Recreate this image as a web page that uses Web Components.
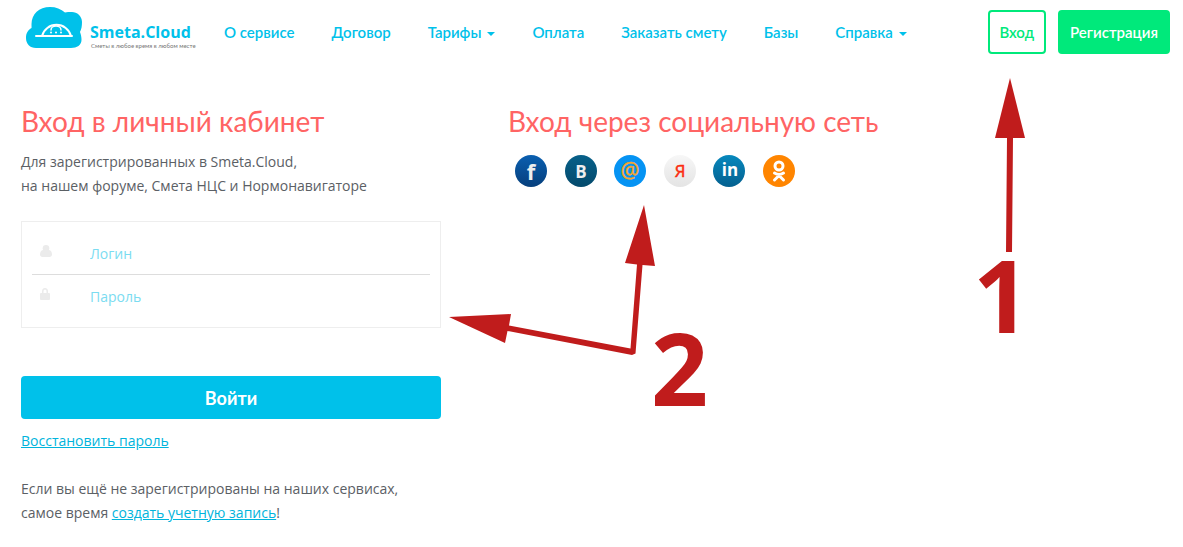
<!DOCTYPE html>
<html lang="ru">
<head>
<meta charset="utf-8">
<title>Smeta.Cloud</title>
<style>
    body {
        margin: 0;
        background: #fff;
        color: #5b6065;
        font: 14px/24px "Open Sans", "Noto Sans", sans-serif;
    }
</style>
</head>
<body>
<smeta-page></smeta-page>

<script>
class SmetaLogo extends HTMLElement {
    constructor() {
        super();
        this.attachShadow({mode:"open"})
    }
    connectedCallback() {
        this.shadowRoot.innerHTML = `<style>
        :host {
            display: block;
            flex: none;
        }
        a, svg {
            display: block;
        }
        </style>
        <a href="#" aria-label="Smeta.Cloud">
        <svg width="172" height="44" viewBox="0 0 172 44">
            <path fill="#00c1ea" d="M40 5.500C36 2 31 0 25 0 14 0 6.500 7 6.500 17c0 2 .2 3.500 0 4C3 23 1 26 1 31c0 6 4 10 10 10h35c6 0 10.500-3 10.500-8 0-3-.5-5-1.500-8 1.500-3 2-6 2-10C57 9 52 5 47 5c-3 0-5 0-7 .5z"/>
            <g fill="none" stroke="#fff" stroke-width="2" stroke-linecap="round">
                <path d="M11 29H47M17 29a15 15 0 0 1 29 0"/>
                <path d="M26 23a5 4 0 0 1 10 0" stroke-width="1.500"/>
            </g>
            <g fill="#fff">
                <circle cx="26" cy="25.500" r="1"/>
                <circle cx="31" cy="25.500" r="1"/>
                <circle cx="36" cy="25.500" r="1"/>
            </g>
            <text x="65" y="31" fill="#00c1ea" font-family="Open Sans" font-weight="700" font-size="16">Smeta.Cloud</text>
            <text x="66" y="41" fill="#777" font-family="Lato" font-size="6">Сметы в любое время в любом месте</text>
        </svg>
        </a>`
    }
}
customElements.define('smeta-logo', SmetaLogo)

class NavItem extends HTMLElement {
    constructor() {
        super();
        this.attachShadow({mode:"open"})
    }
    connectedCallback() {
        this.shadowRoot.innerHTML = `<style>
        :host {
            display: block;
        }
        a {
            display: flex;
            align-items: center;
            gap: 6px;
            color: #00c1ea;
            font: 600 15px/24px Lato, "Open Sans", sans-serif;
            text-decoration: none;
            white-space: nowrap;
        }
        :host([menu]) a::after {
            content: "";
            margin-top: 4px;
            border: 4px solid transparent;
            border-top-color: currentColor;
            border-bottom: 0;
        }
        </style>
        <a href="#"><slot></slot></a>`
    }
}
customElements.define('nav-item', NavItem)

class HeaderButton extends HTMLElement {
    constructor() {
        super();
        this.attachShadow({mode:"open"})
    }
    connectedCallback() {
        this.shadowRoot.innerHTML = `<style>
        :host {
            display: block;
        }
        a {
            display: block;
            padding: 8px 10px;
            border: 2px solid #00e97b;
            border-radius: 4px;
            color: #00e97b;
            font: 600 15px/24px Lato, "Open Sans", sans-serif;
            text-decoration: none;
            white-space: nowrap;
        }
        :host([filled]) a {
            background: #00e97b;
            color: #fff;
        }
        </style>
        <a href="#"><slot></slot></a>`
    }
}
customElements.define('header-button', HeaderButton)

class SiteHeader extends HTMLElement {
    constructor() {
        super();
        this.attachShadow({mode:"open"})
    }
    connectedCallback() {
        this.shadowRoot.innerHTML = `<style>
        :host {
            display: block;
        }
        header {
            display: flex;
            align-items: center;
            padding: 10px 13px 10px 25px;
        }
        nav {
            display: flex;
            gap: 37px;
            margin-left: 27px;
        }
        .buttons {
            display: flex;
            gap: 12px;
            margin-left: auto;
        }
        smeta-logo {
            margin-top: -6px;
        }
        </style>
        <header>
            <smeta-logo></smeta-logo>
            <nav><slot></slot></nav>
            <div class="buttons"><slot name="buttons"></slot></div>
        </header>`
    }
}
customElements.define('site-header', SiteHeader)

class PageSection extends HTMLElement {
    constructor() {
        super();
        this.attachShadow({mode:"open"})
    }
    connectedCallback() {
        this.shadowRoot.innerHTML = `<style>
        :host {
            display: block;
        }
        h2 {
            margin: 0 0 9px;
            color: #ff6464;
            font: 400 28px/40px Lato, "Open Sans", sans-serif;
        }
        </style>
        <section>
            <h2><slot name="title"></slot></h2>
            <slot></slot>
        </section>`
    }
}
customElements.define('page-section', PageSection)

class FormField extends HTMLElement {
    constructor() {
        super();
        this.attachShadow({mode:"open"})
    }
    connectedCallback() {
        let icons = {
            user: '<svg width="12" height="12" viewBox="0 0 12 12"><circle cx="6" cy="3.300" r="3.300"/><path d="M3 5C1 5 0 7.500 0 9.500 0 11 1 12 2.500 12h7C11 12 12 11 12 9.500 12 7.500 11 5 9 5 8 7.500 4 7.500 3 5z"/><path d="M3 5h6v4H3z"/></svg>',
            lock: '<svg width="12" height="12" viewBox="0 0 12 12"><path fill-rule="evenodd" d="M1 5h1V3.500a3 3.500 0 0 1 6 0V5h1q1 0 1 1v5q0 1-1 1H1q-1 0-1-1V6q0-1 1-1zM3.500 5h3V3.500a1.500 2 0 0 0-3 0z"/></svg>'
        }
        this.shadowRoot.innerHTML = `<style>
        :host {
            display: block;
        }
        div {
            display: flex;
        }
        label {
            box-sizing: border-box;
            width: 58px;
            padding: 13px 8px;
        }
        svg {
            display: block;
            fill: #ebebeb;
        }
        input {
            flex: 1;
            min-width: 0;
            height: 42px;
            box-sizing: border-box;
            padding: 0;
            border: 0;
            outline: 0;
            background: none;
            color: inherit;
            font: inherit;
        }
        input::placeholder {
            color: #7bdcf1;
            opacity: 1;
        }
        </style>
        <div>
            <label for="field">${icons[this.getAttribute('icon')]}</label>
            <input id="field" type="${this.getAttribute('type')}" placeholder="${this.getAttribute('label')}" aria-label="${this.getAttribute('label')}">
        </div>`
    }
}
customElements.define('form-field', FormField)

class LoginForm extends HTMLElement {
    constructor() {
        super();
        this.attachShadow({mode:"open"})
    }
    connectedCallback() {
        this.shadowRoot.innerHTML = `<style>
        :host {
            display: block;
        }
        form {
            margin: 0;
        }
        .fields {
            padding: 10px;
            border: 1px solid #eee;
        }
        form-field + form-field {
            border-top: 1px solid #ddd;
        }
        button {
            display: block;
            width: 100%;
            height: 43px;
            margin: 48px 0 10px;
            padding: 0;
            border: 0;
            border-radius: 4px;
            background: #00c1ea;
            color: #fff;
            font: 700 18px/24px Lato, "Open Sans", sans-serif;
        }
        </style>
        <form>
            <div class="fields">
                <form-field icon="user" type="text" label="Логин"></form-field>
                <form-field icon="lock" type="password" label="Пароль"></form-field>
            </div>
            <button type="button">Войти</button>
        </form>`
    }
}
customElements.define('login-form', LoginForm)

class SocialLinks extends HTMLElement {
    constructor() {
        super();
        this.attachShadow({mode:"open"})
    }
    createLink(name, from, to, content) {
        return `<a href="#" aria-label="${name}">
        <svg width="32" height="32" viewBox="0 0 32 32">
            <defs><linearGradient id="${name}" x2="0" y2="1"><stop stop-color="${from}"/><stop offset="1" stop-color="${to}"/></linearGradient></defs>
            <circle cx="16" cy="16" r="16" fill="url(#${name})"/>
            ${content}
        </svg></a>`
    }
    connectedCallback() {
        this.shadowRoot.innerHTML = `<style>
        :host {
            display: block;
        }
        div {
            display: flex;
            justify-content: space-between;
            max-width: 280px;
            padding: 5px 7px;
        }
        svg {
            display: block;
        }
        text {
            font-family: "Open Sans", sans-serif;
            font-weight: 700;
            text-anchor: middle;
        }
        .thin {
            font-weight: 400;
        }
        </style>
        <div>
            ${this.createLink('facebook', '#0a5fb0', '#063f7c', '<text x="16" y="25" font-size="22" fill="#eee">f</text>')}
            ${this.createLink('vk', '#076089', '#044a6c', '<text x="16" y="23" font-size="17" fill="#eee">B</text>')}
            ${this.createLink('mail', '#0593f3', '#0593f3', '<text class="thin" x="16" y="23" font-size="21" fill="#f9a72b" stroke="#f9a72b" stroke-width=".5">@</text>')}
            ${this.createLink('yandex', '#f7f7f7', '#e4e4e4', '<text class="thin" x="16" y="22" font-size="17" fill="#fb2c10" stroke="#fb2c10" stroke-width=".5">Я</text>')}
            ${this.createLink('linkedin', '#0788bd', '#04608f', '<text x="17" y="21" font-size="17" fill="#fff">in</text>')}
            ${this.createLink('ok', '#ff8500', '#ff8500', '<g fill="none" stroke="#fff" stroke-width="3" stroke-linecap="round"><circle cx="16" cy="11" r="4"/><path d="M11.500 18q4.500 3 9 0M16 20.500l-4.500 4.500M16 20.500l4.500 4.500"/></g>')}
        </div>`
    }
}
customElements.define('social-links', SocialLinks)

// arrows and numbers drawn over the page
class CalloutMark extends HTMLElement {
    constructor() {
        super();
        this.attachShadow({mode:"open"})
    }
    connectedCallback() {
        let marks = {
            1: `<svg width="60" height="300" viewBox="970 76 60 300">
                <path d="M1010 78L1025 138H1013L1012 252H1006L1007 138H995z"/>
                <text x="973" y="333">1</text>
            </svg>`,
            2: `<svg width="270" height="250" viewBox="445 200 270 250">
                <path d="M644 205L655 266 642.500 265 635.500 353.500 632 355 507.500 331 505 343 449 317 511 314 509 325.500 630.500 348.500 637 264.500 625 263z"/>
                <text x="651" y="406">2</text>
            </svg>`
        }
        this.shadowRoot.innerHTML = `<style>
        :host {
            position: absolute;
            pointer-events: none;
        }
        svg {
            display: block;
            fill: #c01c1c;
        }
        text {
            font: 700 100px "Open Sans", sans-serif;
        }
        </style>${marks[this.getAttribute('number')]}`
    }
}
customElements.define('callout-mark', CalloutMark)

class SmetaPage extends HTMLElement {
    constructor() {
        super();
        this.attachShadow({mode:"open"})
    }
    connectedCallback() {
        this.shadowRoot.innerHTML = `<style>
        :host {
            display: block;
            position: relative;
        }
        main {
            display: grid;
            grid-template-columns: minmax(0, 420px) 1fr;
            gap: 67px;
            padding: 37px 21px 22px;
        }
        p {
            margin: 0 0 24px;
        }
        .intro {
            margin-bottom: 23px;
        }
        p:last-child {
            margin: 0;
        }
        a {
            color: #00b4dc;
        }
        .first {
            top: 76px;
            right: 153px;
        }
        .second {
            top: 200px;
            left: 445px;
        }
        </style>
        <site-header>
            <nav-item>О сервисе</nav-item>
            <nav-item>Договор</nav-item>
            <nav-item menu>Тарифы</nav-item>
            <nav-item>Оплата</nav-item>
            <nav-item>Заказать смету</nav-item>
            <nav-item>Базы</nav-item>
            <nav-item menu>Справка</nav-item>
            <header-button slot="buttons">Вход</header-button>
            <header-button slot="buttons" filled>Регистрация</header-button>
        </site-header>
        <main>
            <page-section>
                <span slot="title">Вход в личный кабинет</span>
                <p class="intro">Для зарегистрированных в Smeta.Cloud,<br>на нашем форуме, Смета НЦС и Нормонавигаторе</p>
                <login-form></login-form>
                <p><a href="#">Восстановить пароль</a></p>
                <p>Если вы ещё не зарегистрированы на наших сервисах,<br>самое время <a href="#">создать учетную запись</a>!</p>
            </page-section>
            <page-section>
                <span slot="title">Вход через социальную сеть</span>
                <social-links></social-links>
            </page-section>
        </main>
        <callout-mark class="first" number="1"></callout-mark>
        <callout-mark class="second" number="2"></callout-mark>`
    }
}
customElements.define('smeta-page', SmetaPage)
</script>
</body>
</html>
